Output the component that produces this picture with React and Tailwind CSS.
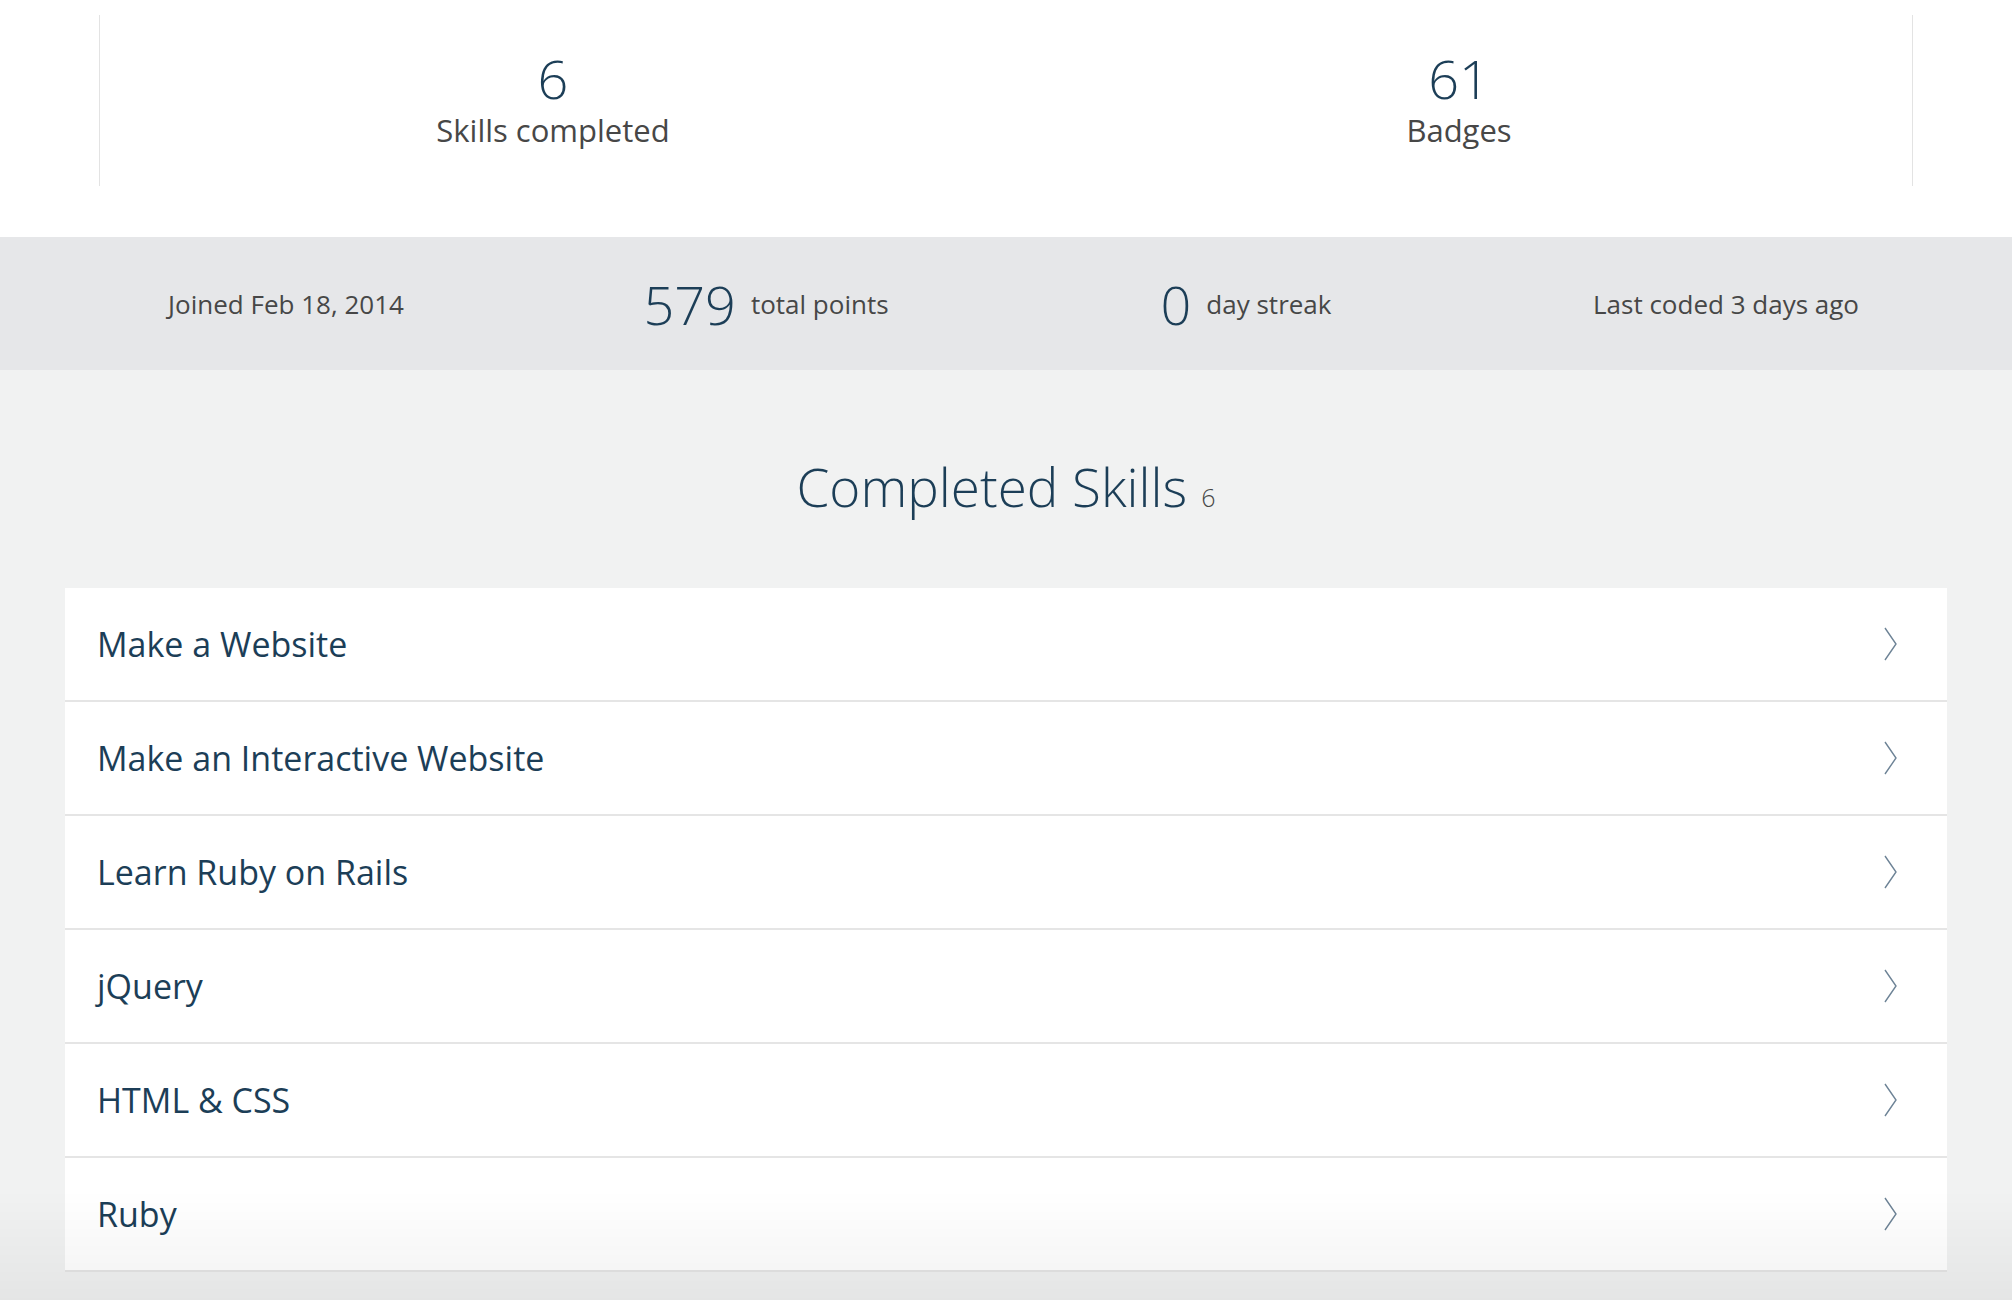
const skills = [
  'Make a Website',
  'Make an Interactive Website',
  'Learn Ruby on Rails',
  'jQuery',
  'HTML & CSS',
  'Ruby',
]

function Chevron() {
  return (
    <svg width="13" height="34" viewBox="0 0 13 34" fill="none" className="shrink-0">
      <polyline points="1,1 12,17 1,33" stroke="#6d8396" strokeWidth="1.4" />
    </svg>
  )
}

export default function App() {
  return (
    <div className="relative min-h-screen bg-[#f1f2f2] font-['Open_Sans',sans-serif] text-[#1c3e57]">
      {/* Top stats */}
      <section className="h-[237px] bg-white pt-[15px]">
        <div className="mx-[99px] grid h-[171px] grid-cols-2 border-x border-[#e3e3e3]">
          <div className="flex flex-col items-center pt-[36px]">
            <div className="text-[54px] font-light leading-none">6</div>
            <div className="mt-[10px] text-[31px] leading-none text-[#474747]">Skills completed</div>
          </div>
          <div className="flex flex-col items-center pt-[36px]">
            <div className="text-[54px] font-light leading-none">61</div>
            <div className="mt-[10px] text-[31px] leading-none text-[#474747]">Badges</div>
          </div>
        </div>
      </section>

      {/* Summary band */}
      <section className="flex h-[133px] items-center bg-[#e6e7e9]">
        <div className="mx-auto grid w-[1920px] grid-cols-4 items-center text-[26px] text-[#474747]">
          <div className="text-center leading-none">Joined Feb 18, 2014</div>
          <div className="flex items-center justify-center gap-[15px]">
            <span className="text-[54px] font-light leading-none text-[#1c3e57]">579</span>
            <span className="leading-none">total points</span>
          </div>
          <div className="flex items-center justify-center gap-[15px]">
            <span className="text-[54px] font-light leading-none text-[#1c3e57]">0</span>
            <span className="leading-none">day streak</span>
          </div>
          <div className="text-center leading-none">Last coded 3 days ago</div>
        </div>
      </section>

      {/* Completed skills */}
      <section className="px-[65px] pb-[30px]">
        <h2 className="mt-[90px] text-center text-[53px] font-light leading-none">
          Completed Skills
          <span className="ml-[14px] text-[25px] text-[#474747]">6</span>
        </h2>
        <ul className="mt-[75px] bg-white">
          {skills.map((s) => (
            <li
              key={s}
              className="flex h-[114px] items-center justify-between border-b-2 border-[#e5e5e5] pl-[32px] pr-[50px]"
            >
              <span className="text-[34px] leading-none">{s}</span>
              <Chevron />
            </li>
          ))}
        </ul>
      </section>

      <div className="pointer-events-none fixed inset-x-0 bottom-0 h-[110px] bg-linear-to-b from-transparent to-black/[0.05]" />
    </div>
  )
}
